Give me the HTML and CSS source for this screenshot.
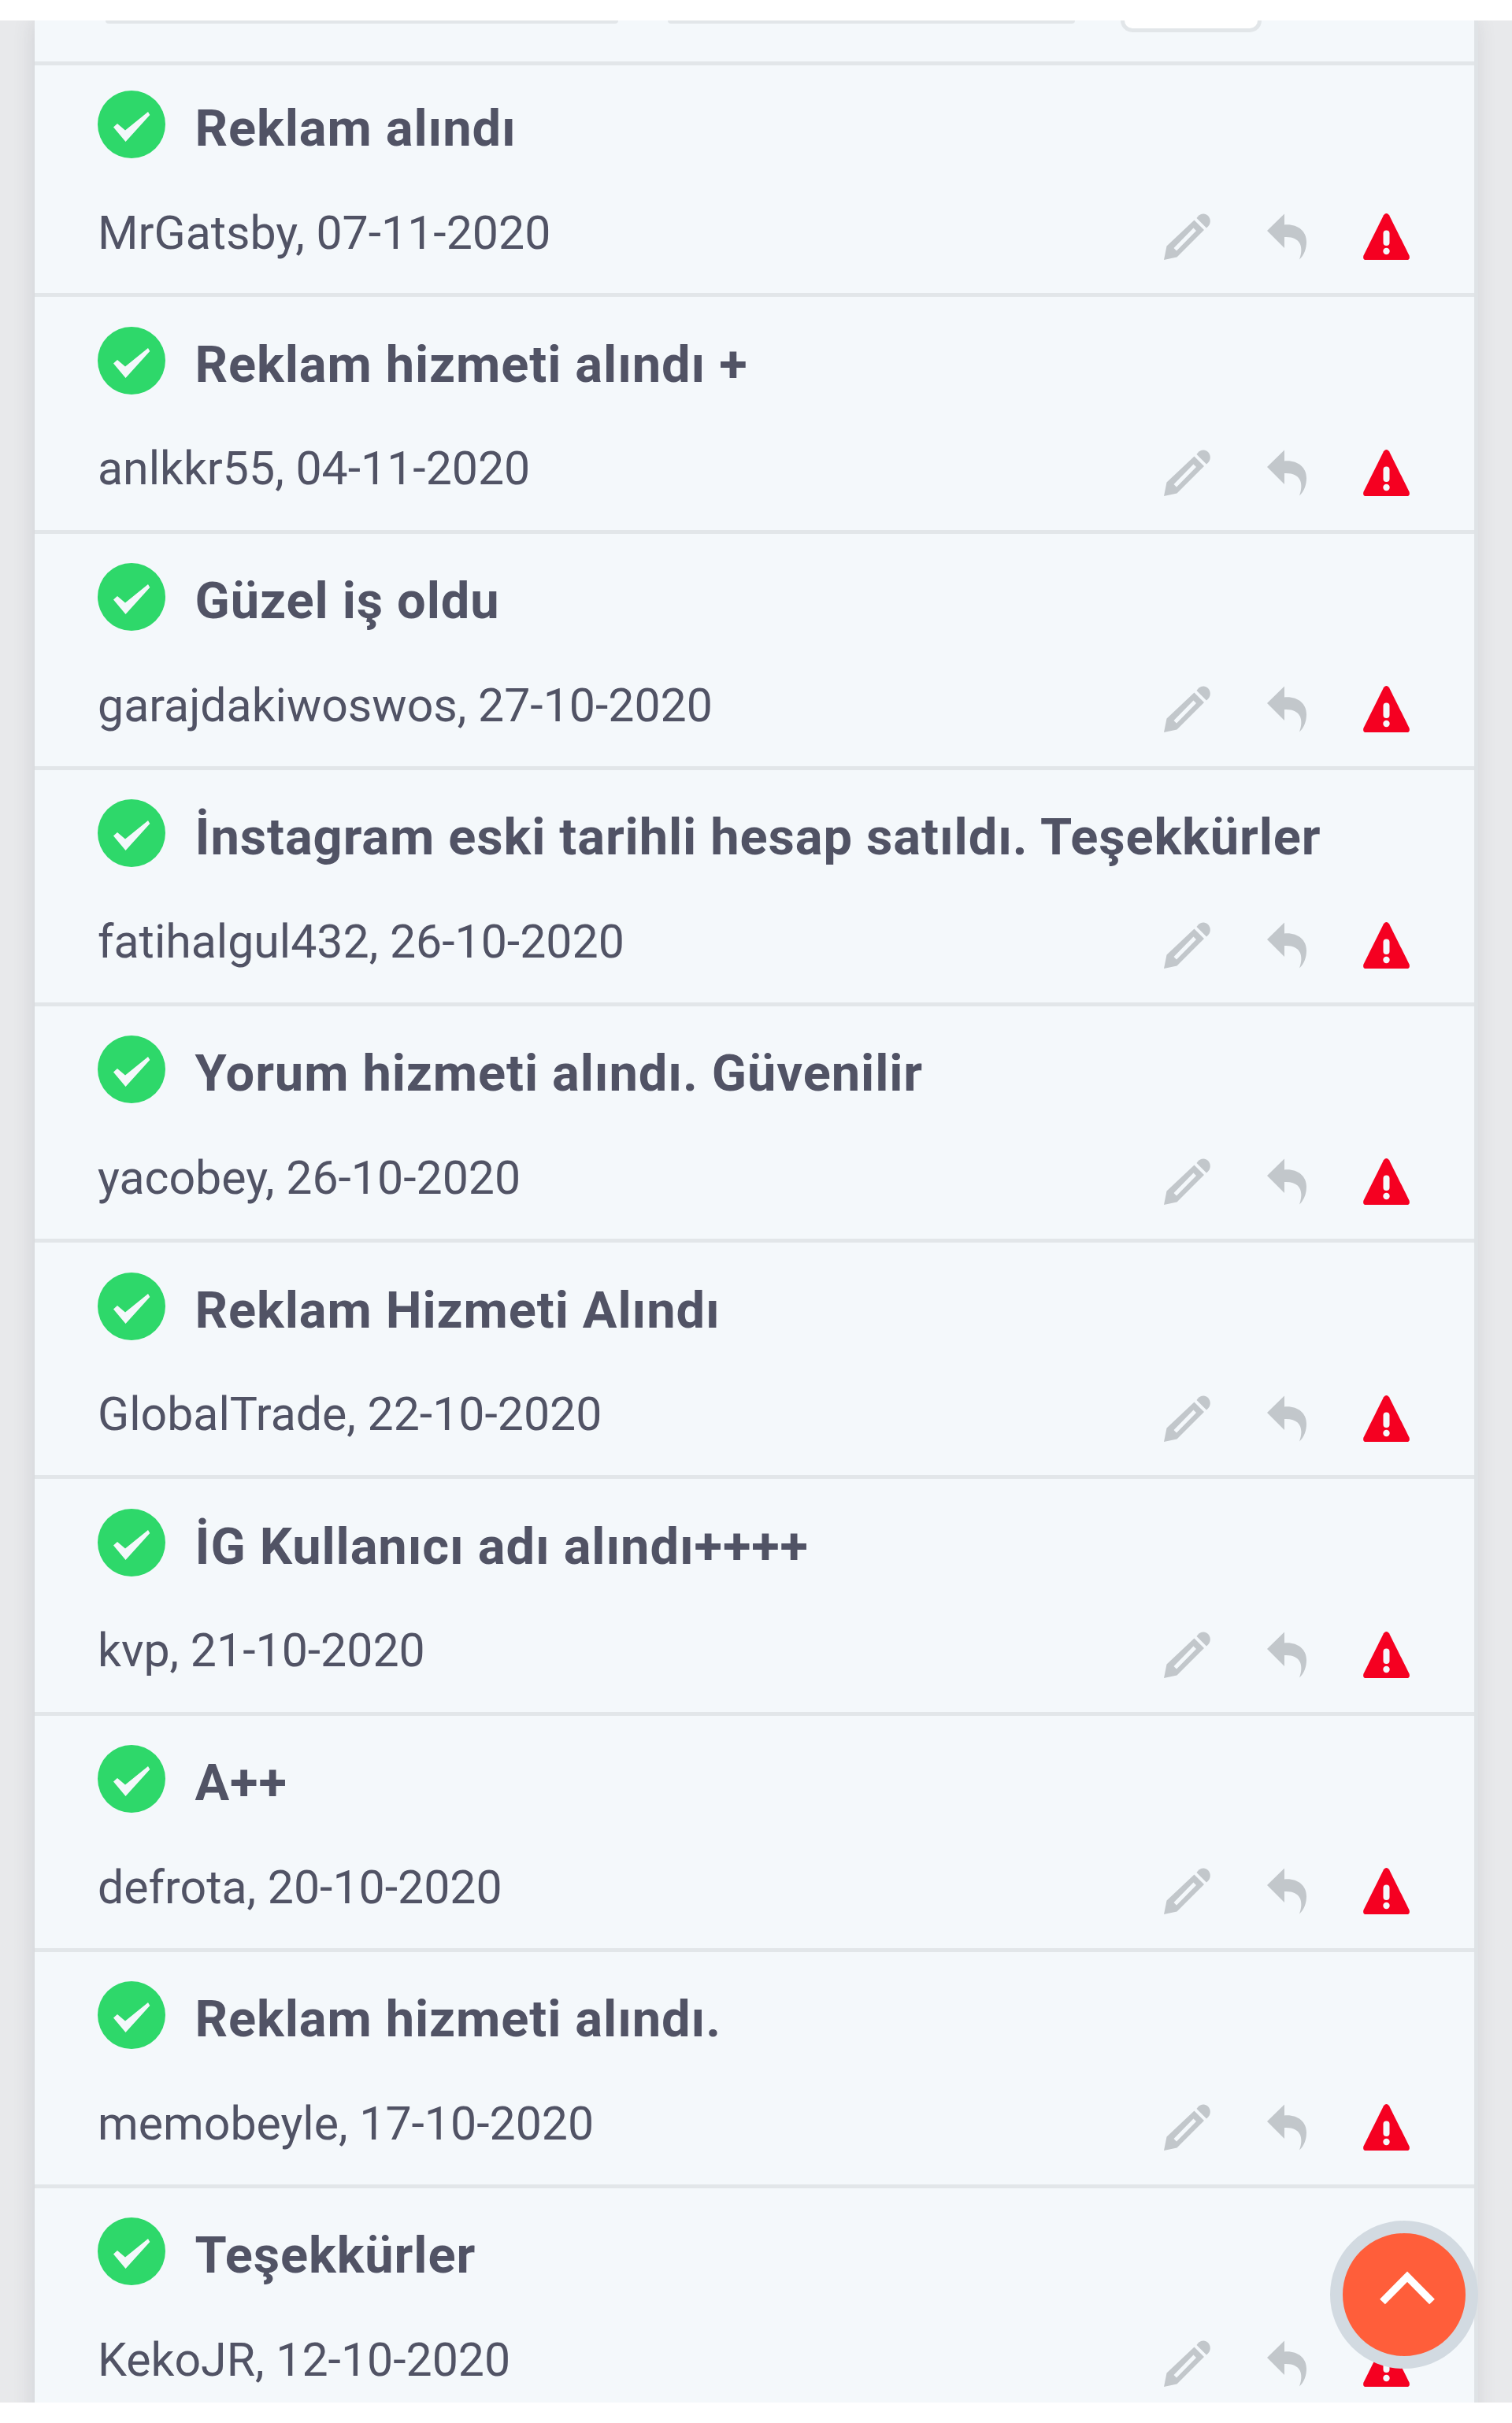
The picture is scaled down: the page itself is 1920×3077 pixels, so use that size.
FILE: index.html
```html
<!DOCTYPE html>
<html lang="tr">
<head>
    <meta charset="UTF-8">
    <meta name="viewport" content="width=device-width, initial-scale=1.0">
    <title>Yorumlar</title>
    <link rel="stylesheet" href="styles.css">
</head>
<body>

    <!-- Icons -->
    <svg width="0" height="0" class="sprite">
        <symbol id="check" viewBox="0 0 86 86">
            <circle cx="43" cy="43" r="43" fill="#2ed86a"/>
            <path d="M20 46.5L25 42L35 50.5L64 27L66.300 31L35.500 65Z" fill="#f4f8fb"/>
        </symbol>
        <symbol id="pencil" viewBox="0 0 59 59">
            <path fill-rule="evenodd" d="M0 59L3.500 41.500L38.500 8.500L51 21L16.500 55.500ZM12.500 44L16 47.500L41 22L37.500 18.500Z"/>
            <path d="M41.500 6C45 0 52 -1.500 56 3S60 14 54 18.500Z"/>
        </symbol>
        <symbol id="reply" viewBox="0 0 50 59">
            <path d="M0 22L22 0.500V14.500C38 13 50 22 50 36C50 45 47 53 41 58.500C47 42 42 29 22 30V44Z"/>
        </symbol>
        <symbol id="warning" viewBox="0 0 59 59">
            <path fill="#f50021" d="M26 2.200Q29.500 -2 33 2.200L58.500 53.500Q60 59 55.500 59H3.500Q-1 59 0.500 53.500Z"/>
            <rect x="25.500" y="21.500" width="8" height="19.500" rx="4" fill="#f4f8fb"/>
            <circle cx="29.500" cy="48" r="4.200" fill="#f4f8fb"/>
        </symbol>
    </svg>

    <div class="page">
        <div class="card">
            <div class="filters">
                <div class="filter filter-first"></div>
                <div class="filter filter-second"></div>
                <div class="filter-btn"></div>
            </div>
            <ul class="comments" id="comments"></ul>
        </div>
        <button class="to-top">
            <svg viewBox="0 0 72 44"><path d="M4.500 39L36 7.200L67.500 39"/></svg>
        </button>
    </div>

    <script>
        const comments = [
            { title: "Reklam alındı", user: "MrGatsby", date: "07-11-2020" },
            { title: "Reklam hizmeti alındı +", user: "anlkkr55", date: "04-11-2020" },
            { title: "Güzel iş oldu", user: "garajdakiwoswos", date: "27-10-2020" },
            { title: "İnstagram eski tarihli hesap satıldı. Teşekkürler", user: "fatihalgul432", date: "26-10-2020" },
            { title: "Yorum hizmeti alındı. Güvenilir", user: "yacobey", date: "26-10-2020" },
            { title: "Reklam Hizmeti Alındı", user: "GlobalTrade", date: "22-10-2020" },
            { title: "İG Kullanıcı adı alındı++++", user: "kvp", date: "21-10-2020" },
            { title: "A++", user: "defrota", date: "20-10-2020" },
            { title: "Reklam hizmeti alındı.", user: "memobeyle", date: "17-10-2020" },
            { title: "Teşekkürler", user: "KekoJR", date: "12-10-2020" }
        ];

        document.getElementById("comments").innerHTML = comments.map(c => `
            <li class="comment">
                <div class="comment-head">
                    <svg class="status"><use href="#check"/></svg>
                    <h3>${c.title}</h3>
                </div>
                <div class="comment-foot">
                    <span class="meta">${c.user}, ${c.date}</span>
                    <div class="actions">
                        <svg class="icon"><use href="#pencil"/></svg>
                        <svg class="icon icon-reply"><use href="#reply"/></svg>
                        <svg class="icon"><use href="#warning"/></svg>
                    </div>
                </div>
            </li>`).join("");
    </script>

</body>
</html>
```
FILE: styles.css
```css
* {
    margin: 0;
    padding: 0;
    box-sizing: border-box;
    font-family: Roboto, sans-serif;
}
body {
    background-color: white;
    padding-top: 26px;
}
.sprite {
    position: absolute;
}
.page {
    position: relative;
    height: 3025px;
    padding: 0 48px 0 43.5px;
    background-color: #e8e9eb;
    overflow: hidden;
}
.card {
    height: 3100px;
    background-color: #f4f8fb;
    box-shadow: 5px 0 0 #dfe3e6, 0 0 26px rgba(60, 70, 85, 0.16);
}
/* Filter bar, scrolled mostly out of view */
.filters {
    display: flex;
    align-items: flex-start;
    height: 57px;
    padding-left: 90px;
    border-bottom: 5px solid #e2e6e9;
}
.filter {
    height: 3.5px;
    background-color: #e2e6e9;
    border-radius: 0 0 12px 12px;
}
.filter-first {
    width: 651px;
    margin-right: 63px;
}
.filter-second {
    width: 517px;
    margin-right: 58px;
}
.filter-btn {
    width: 179px;
    height: 14.5px;
    background-color: white;
    border: 5px solid #e2e6e9;
    border-top: none;
    border-radius: 0 0 18px 18px;
}
/* Comments */
.comments {
    list-style: none;
}
.comment {
    height: 300.2px;
    padding: 37.5px 82.5px 0 80.5px;
    border-top: 5px solid #e2e6e9;
}
.comment:first-child {
    height: 289.4px;
    padding-top: 32px;
    border-top: none;
}
.comment-head {
    display: flex;
    gap: 37.5px;
    height: 86px;
}
.status {
    width: 86px;
    height: 86px;
}
h3 {
    padding-top: 5px;
    font-size: 65px;
    font-weight: 700;
    line-height: 86px;
    letter-spacing: 0.9px;
    color: #515365;
    white-space: nowrap;
}
.comment-foot {
    display: flex;
    justify-content: space-between;
    padding-top: 56px;
}
.meta {
    padding-top: 1.5px;
    font-size: 59px;
    line-height: 74px;
    color: #515365;
}
.actions {
    display: flex;
    gap: 72px;
    padding-top: 14px;
}
.icon {
    width: 59px;
    height: 59px;
    fill: #c2c7cb;
}
.icon-reply {
    width: 50px;
}
.to-top {
    position: absolute;
    left: 1689px;
    top: 2794px;
    display: flex;
    align-items: center;
    justify-content: center;
    width: 188px;
    height: 188px;
    padding: 0 0 16px 8px;
    background-color: #ff5e3a;
    border: 16px solid #d2dae1;
    border-radius: 50%;
    cursor: pointer;
}
.to-top svg {
    width: 72px;
    height: 44px;
    fill: none;
    stroke: white;
    stroke-width: 9.5;
    stroke-linecap: butt;
}
```
